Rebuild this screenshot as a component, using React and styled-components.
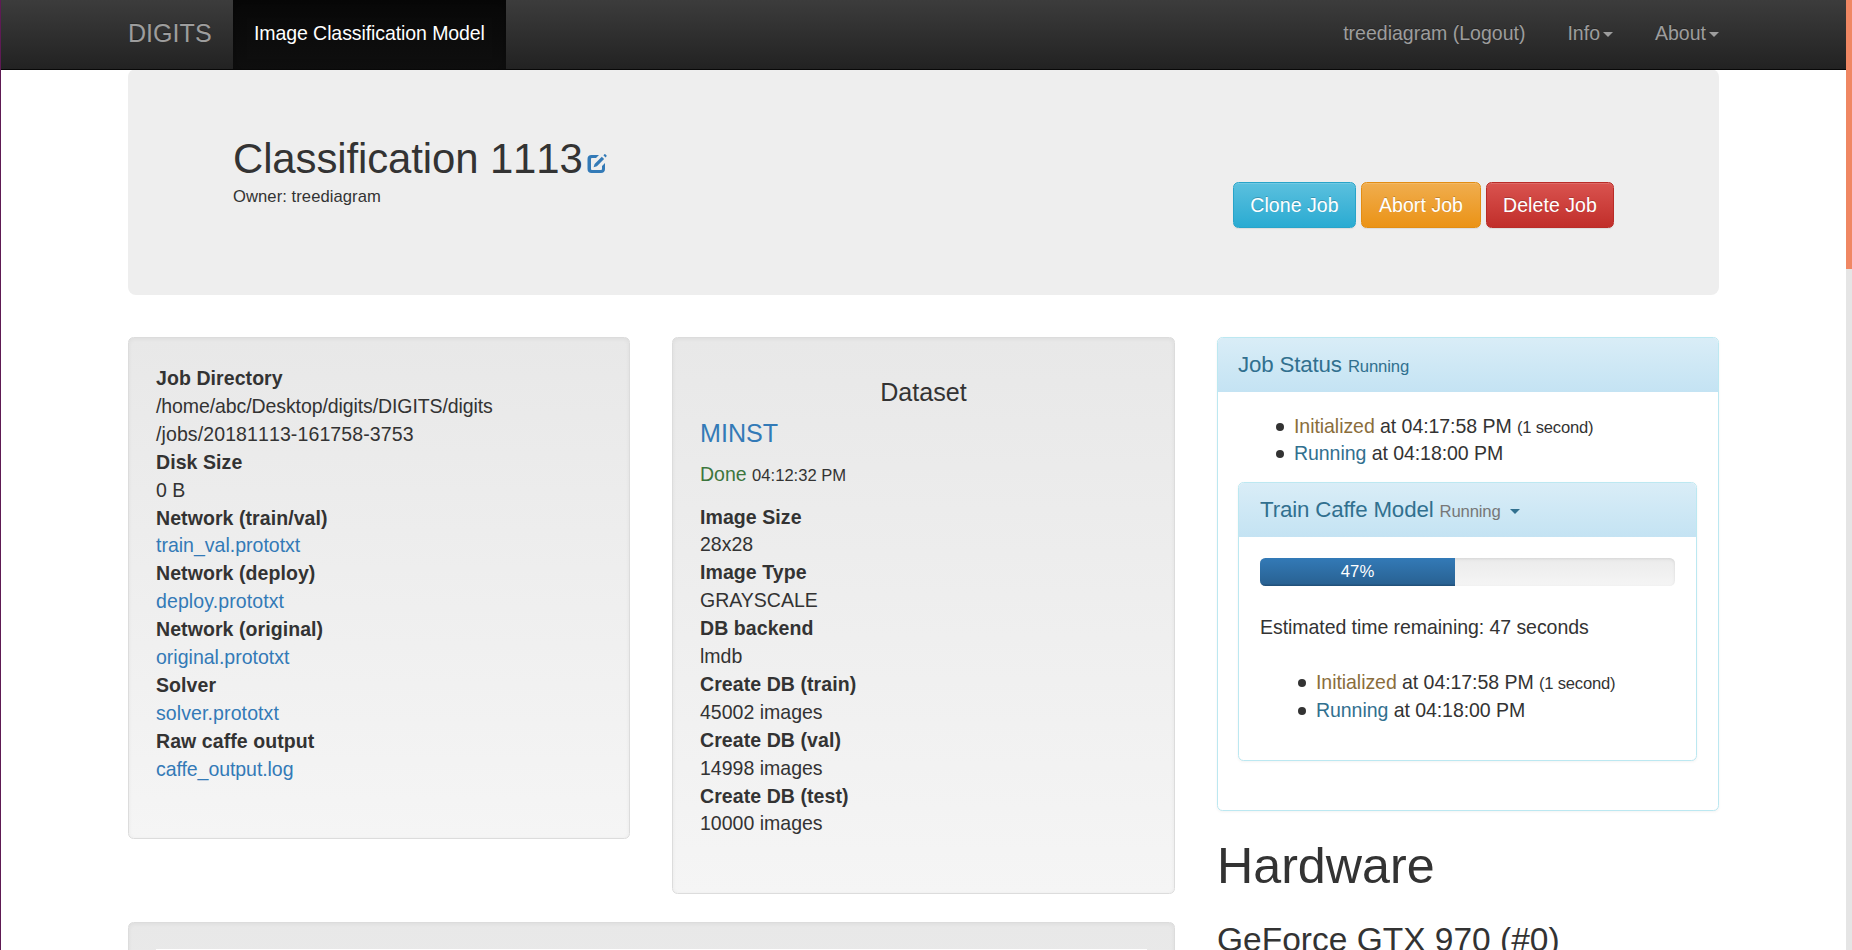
import React from 'react';
import styled, { createGlobalStyle } from 'styled-components';

const GlobalStyle = createGlobalStyle`
  *, *::before, *::after { box-sizing: border-box; }
  html, body { margin: 0; height: 950px; overflow: hidden; background: #fff; }
  body {
    font-family: "Liberation Sans", Arial, sans-serif;
    font-size: 19.53px;
    line-height: 27.9px;
    color: #333;
  }
  a { color: #337ab7; text-decoration: none; }
`;

const Window = styled.div`
  display: flex;
  height: 950px;
  overflow: hidden;
`;

const WindowEdge = styled.div`
  flex: 0 0 1px;
  background: #5e1a54;
`;

const Page = styled.div`
  flex: 1;
  min-width: 0;
  height: 950px;
  overflow: hidden;
`;

const ScrollTrack = styled.div`
  flex: 0 0 6px;
  background: #e5e5e5;
`;

const ScrollThumb = styled.div`
  height: 269px;
  background: #f08763;
`;

const Container = styled.div`
  width: 1591px;
  margin-left: 127px;
`;

const Navbar = styled.nav`
  position: relative;
  z-index: 1;
  height: 70px;
  border-bottom: 1px solid #080808;
  background: linear-gradient(to bottom, #3c3c3c 0%, #222 100%);
`;

const NavRow = styled(Container)`
  display: flex;
  height: 69px;
`;

const Brand = styled.a`
  width: 105px;
  padding-top: 20px;
  font-size: 25.1px;
  && { color: #9d9d9d; }
  text-shadow: 0 -1px 0 rgba(0, 0, 0, 0.25);
`;

const NavItem = styled.a`
  display: flex;
  align-items: center;
  padding: 0 21px 1px;
  white-space: nowrap;
  text-shadow: 0 -1px 0 rgba(0, 0, 0, 0.25);
  && { color: ${(p) => (p.$active ? '#fff' : '#9d9d9d')}; }
  ${(p) => p.$active && `
    letter-spacing: -0.09px;
    background: linear-gradient(to bottom, #080808 0%, #0f0f0f 100%);
    box-shadow: inset 0 4px 13px rgba(0, 0, 0, 0.25);
  `}
`;

const NavRight = styled.div`
  display: flex;
  margin-left: auto;
  margin-right: -21px;
`;

const Caret = styled.span`
  display: inline-block;
  margin-left: 3px;
  vertical-align: middle;
  border-top: 5px solid;
  border-left: 5px solid transparent;
  border-right: 5px solid transparent;
`;

const Jumbotron = styled.header`
  display: flex;
  justify-content: space-between;
  height: 226px;
  margin-top: -1px;
  padding: 67px 105px 0;
  border-radius: 8px;
  background: #eee;
`;

const Title = styled.h2`
  margin: 0;
  font-size: 41.9px;
  line-height: 46px;
  font-weight: 400;
  font-kerning: none;
  letter-spacing: -0.1px;
  white-space: nowrap;
`;

const EditIcon = styled.svg`
  width: 20px;
  height: 20px;
  margin-left: 4px;
  vertical-align: -1px;
  fill: #337ab7;
`;

const Small = styled.small`
  font-size: ${(p) => p.$size ?? 16.6}px;
  line-height: 1;
  color: ${(p) => p.$color ?? 'inherit'};
`;

const Owner = styled.div`
  margin-top: 1px;
  font-size: 16.6px;
  line-height: 28px;
  letter-spacing: 0.07px;
`;

const Actions = styled.div`
  display: flex;
  gap: 5px;
  margin-top: 46px;
`;

const tones = {
  info: ['#5bc0de', '#2aabd2', '#28a4c9'],
  warning: ['#f0ad4e', '#eb9316', '#e38d13'],
  danger: ['#d9534f', '#c12e2a', '#b92c28'],
};

const Button = styled.button`
  width: ${(p) => p.$width}px;
  height: 46px;
  padding: 1px 0 0;
  border: 1px solid ${(p) => tones[p.$tone][2]};
  border-radius: 5.5px;
  background: linear-gradient(to bottom, ${(p) => tones[p.$tone][0]}, ${(p) => tones[p.$tone][1]});
  box-shadow: inset 0 1px 0 rgba(255, 255, 255, 0.15), 0 1px 1px rgba(0, 0, 0, 0.075);
  color: #fff;
  font: inherit;
  letter-spacing: 0.06px;
  text-shadow: 0 -1px 0 rgba(0, 0, 0, 0.2);
  white-space: nowrap;
`;

const Columns = styled.main`
  display: grid;
  grid-template-columns: 1047px 502px;
  gap: 42px;
  margin-top: 42px;
`;

const LeftArea = styled.div`
  display: grid;
  grid-template-columns: 502px 503px;
  column-gap: 42px;
  row-gap: 28px;
  align-items: start;
  align-content: start;
`;

const Well = styled.section`
  height: ${(p) => p.$height}px;
  padding: 27px;
  border: 1px solid #dcdcdc;
  border-radius: 5.5px;
  background: linear-gradient(to bottom, #e8e8e8 0%, #f5f5f5 100%);
  box-shadow: inset 0 1px 4px rgba(0, 0, 0, 0.05), 0 1px 0 rgba(255, 255, 255, 0.1);
`;

const WideWell = styled(Well)`
  grid-column: 1 / -1;
  padding: 26px 27px;
`;

const ChartBox = styled.div`
  height: 400px;
  background: #fff;
`;

const Definitions = styled.dl`
  margin: 0;
`;

const Term = styled.dt`
  font-weight: 700;
  letter-spacing: 0.07px;
`;

const Detail = styled.dd`
  margin: 0;
`;

const Tracked = styled.span`
  letter-spacing: ${(p) => p.$by}px;
  font-kerning: ${(p) => (p.$noKerning ? 'none' : 'auto')};
`;

const FileLink = styled.a`
  letter-spacing: ${(p) => p.$tracking ?? 0.1}px;
`;

const DatasetHeading = styled.h4`
  margin: 14px 0;
  font-size: 25.1px;
  line-height: 27px;
  font-weight: 400;
  text-align: ${(p) => (p.$center ? 'center' : 'left')};
`;

const DatasetStatus = styled.p`
  margin: 0 0 14.6px;
`;

const Panel = styled.section`
  height: ${(p) => p.$height}px;
  border: 1px solid #bce8f1;
  border-radius: 5.5px;
  background: #fff;
  box-shadow: 0 1px 3px rgba(0, 0, 0, 0.05);
`;

const PanelHeading = styled.div`
  height: 54px;
  padding: 13px 20px 0 ${(p) => p.$inset ?? 20}px;
  border-radius: 4.5px 4.5px 0 0;
  background: linear-gradient(to bottom, #d9edf7 0%, #c4e3f3 100%);
  color: #31708f;
  font-size: 22.3px;
  letter-spacing: -0.15px;
`;

const PanelBody = styled.div`
  padding: 20.6px 21px 21px ${(p) => p.$inset ?? 20}px;
`;

const StatusList = styled.ul`
  margin: 0 0 13.6px;
  padding-left: 56px;
  list-style: none;
  letter-spacing: -0.06px;

  small { letter-spacing: -0.2px; }
`;

const StatusEntry = styled.li`
  height: 27.9px;
  white-space: nowrap;

  &::before {
    content: '';
    display: inline-block;
    width: 8px;
    height: 8px;
    margin-left: -18px;
    margin-right: 10px;
    border-radius: 50%;
    background: #333;
    vertical-align: 2px;
  }
`;

const Status = styled.span`
  color: ${(p) => p.$color};
`;

const Progress = styled.div`
  height: 28px;
  margin-bottom: 28px;
  overflow: hidden;
  border-radius: 5.5px;
  background: linear-gradient(to bottom, #ebebeb 0%, #f5f5f5 100%);
  box-shadow: inset 0 1px 3px rgba(0, 0, 0, 0.1);
`;

const ProgressBar = styled.div`
  height: 100%;
  background: linear-gradient(to bottom, #337ab7 0%, #286090 100%);
  box-shadow: inset 0 -1.4px 0 rgba(0, 0, 0, 0.15);
  color: #fff;
  font-size: 16.7px;
  line-height: 27px;
  text-align: center;
`;

const Estimate = styled.p`
  margin: 0 0 28px;
  letter-spacing: -0.06px;
`;

const HardwareTitle = styled.h1`
  margin: 28px 0 14px;
  font-size: 50.2px;
  line-height: 55px;
  font-weight: 400;
`;

const DeviceTitle = styled.h3`
  margin: 27px 0 0;
  font-size: 33.5px;
  line-height: 37px;
  font-weight: 400;
  white-space: nowrap;
`;

const jobDetails = [
  ['Job Directory', (
    <>
      <Tracked $by={-0.1}>/home/abc/Desktop/digits/DIGITS/digits</Tracked>
      <br />
      <Tracked $by={0.1} $noKerning>/jobs/20181113-161758-3753</Tracked>
    </>
  )],
  ['Disk Size', '0 B'],
  ['Network (train/val)', <FileLink $tracking={0}>train_val.prototxt</FileLink>],
  ['Network (deploy)', <FileLink>deploy.prototxt</FileLink>],
  ['Network (original)', <FileLink $tracking={0}>original.prototxt</FileLink>],
  ['Solver', <FileLink>solver.prototxt</FileLink>],
  ['Raw caffe output', <FileLink $tracking={-0.07}>caffe_output.log</FileLink>],
];

const datasetDetails = [
  ['Image Size', '28x28'],
  ['Image Type', 'GRAYSCALE'],
  ['DB backend', 'lmdb'],
  ['Create DB (train)', '45002 images'],
  ['Create DB (val)', '14998 images'],
  ['Create DB (test)', '10000 images'],
];

function DetailList({ items }) {
  return (
    <Definitions>
      {items.map(([term, detail]) => (
        <React.Fragment key={term}>
          <Term>{term}</Term>
          <Detail>{detail}</Detail>
        </React.Fragment>
      ))}
    </Definitions>
  );
}

function StatusHistory() {
  return (
    <StatusList>
      <StatusEntry>
        <Status $color="#8a6d3b">Initialized</Status> at 04:17:58 PM <Small>(1 second)</Small>
      </StatusEntry>
      <StatusEntry>
        <Status $color="#31708f">Running</Status> at 04:18:00 PM
      </StatusEntry>
    </StatusList>
  );
}

export default function App() {
  const progress = 47;
  return (
    <Window>
      <GlobalStyle />
      <WindowEdge />
      <Page>
        <Navbar>
          <NavRow>
            <Brand>DIGITS</Brand>
            <NavItem $active>Image Classification Model</NavItem>
            <NavRight>
              <NavItem>treediagram (Logout)</NavItem>
              <NavItem>Info<Caret /></NavItem>
              <NavItem>About<Caret /></NavItem>
            </NavRight>
          </NavRow>
        </Navbar>
        <Container>
          <Jumbotron>
            <div>
              <Title>
                Classification 1113
                <EditIcon viewBox="0 0 20 20">
                  <path d="M4.500 1H12l-3 3H5.300C4.300 4 4 4.400 4 5.300v9.400c0 .9.4 1.300 1.300 1.300h8.400c.9 0 1.300-.4 1.300-1.300V12l3-3v6c0 2.500-1.500 4-4 4H4.500C2 19 .5 17.500.5 15V5C.5 2.500 2 1 4.500 1z" />
                  <path d="M14.800 2.700l2.300 2.300-7.200 7.200-3.300 1.100 1-3.400zM16.400 1.300l.9-.9c.4-.4.8-.4 1.200 0l.9.900c.4.4.4.8 0 1.200l-.9.9z" />
                </EditIcon>
              </Title>
              <Owner>Owner: treediagram</Owner>
            </div>
            <Actions>
              <Button $tone="info" $width={123}>Clone Job</Button>
              <Button $tone="warning" $width={120}>Abort Job</Button>
              <Button $tone="danger" $width={128}>Delete Job</Button>
            </Actions>
          </Jumbotron>
          <Columns>
            <LeftArea>
              <Well $height={502}><DetailList items={jobDetails} /></Well>
              <Well $height={557}>
                <DatasetHeading $center>Dataset</DatasetHeading>
                <DatasetHeading><a>MINST</a></DatasetHeading>
                <DatasetStatus><Status $color="#3c763d">Done</Status> <Small>04:12:32 PM</Small></DatasetStatus>
                <DetailList items={datasetDetails} />
              </Well>
              <WideWell $height={500}><ChartBox /></WideWell>
            </LeftArea>
            <aside>
              <Panel $height={474}>
                <PanelHeading>Job Status <Small $size={16.7}>Running</Small></PanelHeading>
                <PanelBody>
                  <StatusHistory />
                  <Panel $height={279}>
                    <PanelHeading $inset={21}>
                      Train Caffe Model <Small $size={16.7} $color="#777">Running</Small> <Caret />
                    </PanelHeading>
                    <PanelBody $inset={21}>
                      <Progress>
                        <ProgressBar style={{ width: `${progress}%` }}>{progress}%</ProgressBar>
                      </Progress>
                      <Estimate>Estimated time remaining: 47 seconds</Estimate>
                      <StatusHistory />
                    </PanelBody>
                  </Panel>
                </PanelBody>
              </Panel>
              <HardwareTitle>Hardware</HardwareTitle>
              <DeviceTitle>GeForce GTX 970 (#0)</DeviceTitle>
            </aside>
          </Columns>
        </Container>
      </Page>
      <ScrollTrack><ScrollThumb /></ScrollTrack>
    </Window>
  );
}
